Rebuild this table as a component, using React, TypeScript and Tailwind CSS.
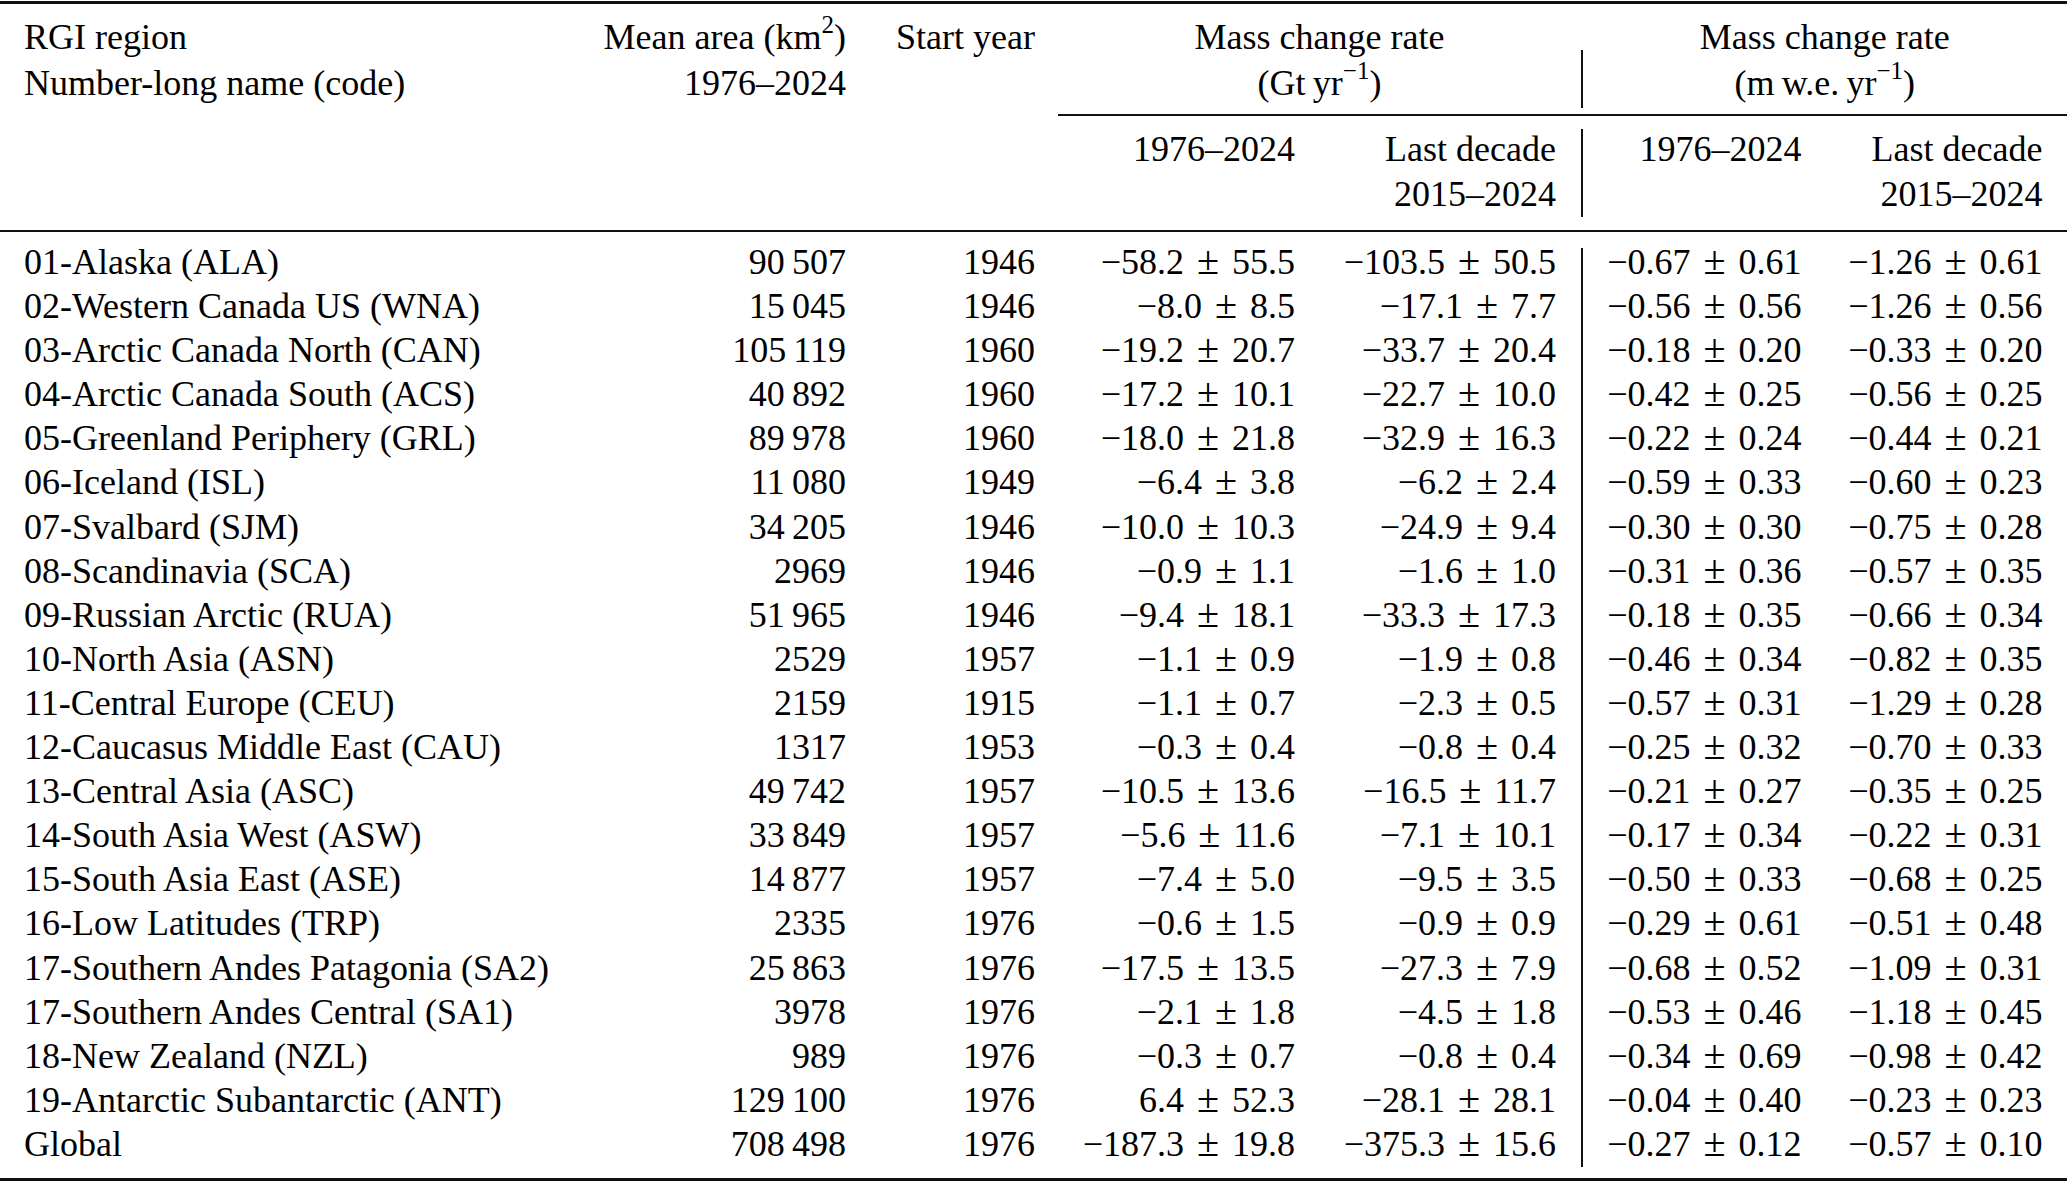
import React from "react";

type Row = [string, string, string, string, string, string, string];

const rows: Row[] = [
  ["01-Alaska (ALA)", "90\u2009507", "1946", "−58.2|55.5", "−103.5|50.5", "−0.67|0.61", "−1.26|0.61"],
  ["02-Western Canada US (WNA)", "15\u2009045", "1946", "−8.0|8.5", "−17.1|7.7", "−0.56|0.56", "−1.26|0.56"],
  ["03-Arctic Canada North (CAN)", "105\u2009119", "1960", "−19.2|20.7", "−33.7|20.4", "−0.18|0.20", "−0.33|0.20"],
  ["04-Arctic Canada South (ACS)", "40\u2009892", "1960", "−17.2|10.1", "−22.7|10.0", "−0.42|0.25", "−0.56|0.25"],
  ["05-Greenland Periphery (GRL)", "89\u2009978", "1960", "−18.0|21.8", "−32.9|16.3", "−0.22|0.24", "−0.44|0.21"],
  ["06-Iceland (ISL)", "11\u2009080", "1949", "−6.4|3.8", "−6.2|2.4", "−0.59|0.33", "−0.60|0.23"],
  ["07-Svalbard (SJM)", "34\u2009205", "1946", "−10.0|10.3", "−24.9|9.4", "−0.30|0.30", "−0.75|0.28"],
  ["08-Scandinavia (SCA)", "2969", "1946", "−0.9|1.1", "−1.6|1.0", "−0.31|0.36", "−0.57|0.35"],
  ["09-Russian Arctic (RUA)", "51\u2009965", "1946", "−9.4|18.1", "−33.3|17.3", "−0.18|0.35", "−0.66|0.34"],
  ["10-North Asia (ASN)", "2529", "1957", "−1.1|0.9", "−1.9|0.8", "−0.46|0.34", "−0.82|0.35"],
  ["11-Central Europe (CEU)", "2159", "1915", "−1.1|0.7", "−2.3|0.5", "−0.57|0.31", "−1.29|0.28"],
  ["12-Caucasus Middle East (CAU)", "1317", "1953", "−0.3|0.4", "−0.8|0.4", "−0.25|0.32", "−0.70|0.33"],
  ["13-Central Asia (ASC)", "49\u2009742", "1957", "−10.5|13.6", "−16.5|11.7", "−0.21|0.27", "−0.35|0.25"],
  ["14-South Asia West (ASW)", "33\u2009849", "1957", "−5.6|11.6", "−7.1|10.1", "−0.17|0.34", "−0.22|0.31"],
  ["15-South Asia East (ASE)", "14\u2009877", "1957", "−7.4|5.0", "−9.5|3.5", "−0.50|0.33", "−0.68|0.25"],
  ["16-Low Latitudes (TRP)", "2335", "1976", "−0.6|1.5", "−0.9|0.9", "−0.29|0.61", "−0.51|0.48"],
  ["17-Southern Andes Patagonia (SA2)", "25\u2009863", "1976", "−17.5|13.5", "−27.3|7.9", "−0.68|0.52", "−1.09|0.31"],
  ["17-Southern Andes Central (SA1)", "3978", "1976", "−2.1|1.8", "−4.5|1.8", "−0.53|0.46", "−1.18|0.45"],
  ["18-New Zealand (NZL)", "989", "1976", "−0.3|0.7", "−0.8|0.4", "−0.34|0.69", "−0.98|0.42"],
  ["19-Antarctic Subantarctic (ANT)", "129\u2009100", "1976", "6.4|52.3", "−28.1|28.1", "−0.04|0.40", "−0.23|0.23"],
  ["Global", "708\u2009498", "1976", "−187.3|19.8", "−375.3|15.6", "−0.27|0.12", "−0.57|0.10"],
];

function PM({ v }: { v: string }) {
  const [a, b] = v.split("|");
  return (
    <span className="whitespace-nowrap">
      {a}
      <span className="mx-[0.32em] text-[1.12em] leading-none">±</span>
      {b}
    </span>
  );
}

function Sup({ children }: { children: React.ReactNode }) {
  return <sup className="text-[25px] -top-[16px]">{children}</sup>;
}

export default function App() {
  return (
    <div className="w-[2067px] min-h-[1182px] bg-white text-black text-[36px] font-['Liberation_Serif','Times_New_Roman',serif]">
      <div className="pt-[1px]">
        {/* top rule */}
        <div className="h-[3px] bg-[#111]" />

        {/* header */}
        <div className="flex">
          <div className="w-[1035px] grid grid-cols-[560px_286px_189px] pt-[10px] leading-[46px]">
            <div className="pl-[24px]">
              <div>RGI region</div>
              <div>Number-long name (code)</div>
            </div>
            <div className="text-right">
              <div>
                Mean area (km<Sup>2</Sup>)
              </div>
              <div>1976–2024</div>
            </div>
            <div className="text-right">Start year</div>
          </div>

          <div className="flex-1 flex flex-col">
            <div className="flex h-[110px]">
              <div className="w-[546px] pl-[23px] text-center pt-[10px] leading-[46px]">
                <div>Mass change rate</div>
                <div>
                  (Gt{"\u2009"}yr<Sup>−1</Sup>)
                </div>
              </div>
              <div className="w-[1.5px] bg-[#111] mt-[46px] mb-[6px]" />
              <div className="flex-1 text-center pt-[10px] leading-[46px]">
                <div>Mass change rate</div>
                <div>
                  (m{"\u2009"}w.e.{"\u2009"}yr<Sup>−1</Sup>)
                </div>
              </div>
            </div>
            <div className="ml-[23px] h-[2px] bg-[#111]" />
            <div className="flex h-[114px] leading-[45px]">
              <div className="w-[260px] text-right pt-[11px]">1976–2024</div>
              <div className="w-[286px] pr-[25px] text-right pt-[11px]">
                <div>Last decade</div>
                <div>2015–2024</div>
              </div>
              <div className="w-[1.5px] bg-[#111] mt-[13px] mb-[13px]" />
              <div className="w-[219px] text-right pt-[11px]">1976–2024</div>
              <div className="w-[241px] text-right pt-[11px]">
                <div>Last decade</div>
                <div>2015–2024</div>
              </div>
            </div>
          </div>
        </div>

        {/* midrule */}
        <div className="h-[2px] bg-[#111]" />

        {/* body */}
        <div className="flex">
          <div className="w-[1581px] grid grid-cols-[560px_286px_189px_260px_286px] pt-[8px] pb-[12px] leading-[44.1px]">
            {rows.map((r) => (
              <React.Fragment key={r[0]}>
                <div className="pl-[24px] whitespace-nowrap">{r[0]}</div>
                <div className="text-right">{r[1]}</div>
                <div className="text-right">{r[2]}</div>
                <div className="text-right">
                  <PM v={r[3]} />
                </div>
                <div className="text-right pr-[25px]">
                  <PM v={r[4]} />
                </div>
              </React.Fragment>
            ))}
          </div>
          <div className="w-[1.5px] bg-[#111] mt-[16px] mb-[11px]" />
          <div className="flex-1 grid grid-cols-[219px_241px] content-start pt-[8px] leading-[44.1px]">
            {rows.map((r) => (
              <React.Fragment key={r[0]}>
                <div className="text-right">
                  <PM v={r[5]} />
                </div>
                <div className="text-right">
                  <PM v={r[6]} />
                </div>
              </React.Fragment>
            ))}
          </div>
        </div>

        {/* bottom rule */}
        <div className="h-[3px] bg-[#111]" />
      </div>
    </div>
  );
}
